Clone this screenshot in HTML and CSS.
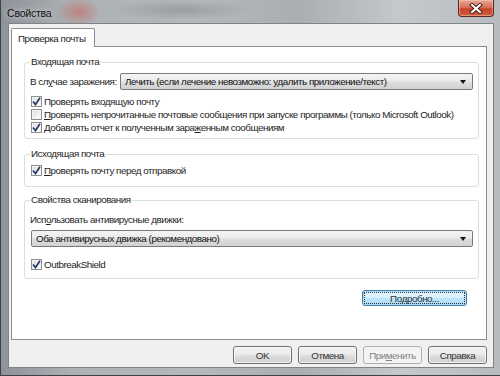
FILE: index.html
```html
<!DOCTYPE html>
<html>
    <head>
        <title>Свойства</title>
        <link rel="stylesheet" href="styles.css">
    </head>
    <body>
        <div class="window">
            <div class="titlebar">
                <span class="title">Свойства</span>
                <div class="close-btn">
                    <svg width="14" height="11" viewBox="0 0 14 11">
                        <path d="M3 2 L11 9 M11 2 L3 9" stroke="#4a1e16" stroke-width="4" stroke-linecap="square"/>
                        <path d="M3 2 L11 9 M11 2 L3 9" stroke="#fff" stroke-width="2" stroke-linecap="square"/>
                    </svg>
                </div>
            </div>

            <div class="client">
                <div class="tabs">
                    <div class="tab">Проверка почты</div>
                </div>

                <div class="tab-panel">
                    <fieldset class="group group-incoming">
                        <legend>Входящая почта</legend>
                        <div class="field-row">
                            <label class="field-label">В сл<u>у</u>чае заражения:</label>
                            <div class="combo">
                                <span>Лечить (если лечение невозможно: удалить приложение/текст)</span>
                                <span class="combo-arrow"></span>
                            </div>
                        </div>
                        <div class="check-row first">
                            <span class="checkbox checked"><svg width="9" height="9" viewBox="0 0 9 9"><path d="M1 4.5 L3.5 7.5 L8 0.8" fill="none" stroke="#263a6b" stroke-width="1.7"/></svg></span>
                            <span>Проверять входящую почту</span>
                        </div>
                        <div class="check-row">
                            <span class="checkbox"></span>
                            <span><u>П</u>роверять непрочитанные почтовые сообщения при запуске программы (только Microsoft Outlook)</span>
                        </div>
                        <div class="check-row">
                            <span class="checkbox checked"><svg width="9" height="9" viewBox="0 0 9 9"><path d="M1 4.5 L3.5 7.5 L8 0.8" fill="none" stroke="#263a6b" stroke-width="1.7"/></svg></span>
                            <span>Добавлять отчет к полученным зара<u>ж</u>енным сообщениям</span>
                        </div>
                    </fieldset>

                    <fieldset class="group group-outgoing">
                        <legend>Исходящая почта</legend>
                        <div class="check-row">
                            <span class="checkbox checked"><svg width="9" height="9" viewBox="0 0 9 9"><path d="M1 4.5 L3.5 7.5 L8 0.8" fill="none" stroke="#263a6b" stroke-width="1.7"/></svg></span>
                            <span><u>П</u>роверять почту перед отправкой</span>
                        </div>
                    </fieldset>

                    <fieldset class="group group-scan">
                        <legend>Свойства сканирования</legend>
                        <div class="plain-label">Исп<u>о</u>льзовать антивирусные движки:</div>
                        <div class="combo combo-wide">
                            <span>Оба антивирусных движка (рекомендовано)</span>
                            <span class="combo-arrow"></span>
                        </div>
                        <div class="check-row">
                            <span class="checkbox checked"><svg width="9" height="9" viewBox="0 0 9 9"><path d="M1 4.5 L3.5 7.5 L8 0.8" fill="none" stroke="#263a6b" stroke-width="1.7"/></svg></span>
                            <span>OutbreakShield</span>
                        </div>
                    </fieldset>

                    <div class="details-row">
                        <div class="button button-focused">По<u>д</u>робно...</div>
                    </div>
                </div>

                <div class="button-bar">
                    <div class="button">OK</div>
                    <div class="button">Отмена</div>
                    <div class="button button-disabled">При<u>м</u>енить</div>
                    <div class="button">Справка</div>
                </div>
            </div>
        </div>
    </body>
</html>
```

FILE: styles.css
```css
body {
    margin: 0;
    width: 500px;
    height: 376px;
    overflow: hidden;
    font-family: "Liberation Sans", Arial, sans-serif;
    font-size: 9.8px;
    letter-spacing: -0.45px;
    white-space: nowrap;
    color: #1e1e1e;
}

/* Aero glass frame */
.window {
    box-sizing: border-box;
    height: 376px;
    display: flex;
    flex-direction: column;
    border-left: 1px solid #3c4247;
    border-bottom: 1px solid #3c4247;
    background:
        radial-gradient(ellipse 22px 14px at 78px 12px, rgba(205, 70, 60, 0.45), rgba(205, 70, 60, 0)),
        radial-gradient(ellipse 70px 10px at 180px 10px, rgba(80, 80, 80, 0.25), rgba(80, 80, 80, 0)),
        linear-gradient(to right, #8d9399 0%, #aeb2b6 15%, #b4b8bc 40%, #a9aeb2 60%, #c6c9cc 80%, #b7bbbf 100%);
}

.titlebar {
    height: 23px;
    display: flex;
    align-items: center;
    justify-content: space-between;
}

.title {
    margin-left: 6px;
    margin-top: 2px;
    font-size: 10.5px;
    letter-spacing: -0.2px;
    color: #111;
    text-shadow: 0 0 6px rgba(255, 255, 255, 0.8);
}

.close-btn {
    align-self: flex-start;
    box-sizing: border-box;
    width: 36px;
    height: 17px;
    margin-right: 6px;
    display: flex;
    align-items: center;
    justify-content: center;
    border: 1px solid #5a2a22;
    border-top: none;
    border-radius: 0 0 4px 4px;
    background: linear-gradient(to bottom, #e9a797 0%, #d9735d 45%, #c7432b 55%, #d25a3f 100%);
    box-shadow: inset 0 0 0 1px rgba(255, 210, 200, 0.45);
}

.client {
    flex: 1;
    display: flex;
    flex-direction: column;
    margin: 0 6px 7px 7px;
    padding: 4px 6px 0 2px;
    background-color: #f0f0f0;
    border: 1px solid #7c8389;
}

/* Tabs */
.tabs {
    display: flex;
}

.tab {
    position: relative;
    z-index: 1;
    box-sizing: border-box;
    height: 19px;
    margin-bottom: -1px;
    padding: 3px 9px 0 6px;
    background-color: #fff;
    border: 1px solid #898c95;
    border-bottom: none;
    border-radius: 2px 2px 0 0;
    line-height: 13px;
}

.tab-panel {
    flex: 1;
    padding: 9px 7px 0 12px;
    background-color: #fff;
    border: 1px solid #898c95;
}

/* Group boxes */
.group {
    margin: 0;
    padding: 0 5px;
    border: 1px solid #d8dfe3;
    border-radius: 3px;
    min-width: 0;
}

.group legend {
    padding: 0 1px;
    line-height: 12px;
}

.group-incoming {
    padding-top: 5px;
    padding-bottom: 4px;
}

.group-outgoing {
    margin-top: 9px;
    padding-top: 4px;
    padding-bottom: 9px;
}

.group-scan {
    margin-top: 7px;
    padding-top: 8px;
    padding-bottom: 7px;
}

.field-row {
    display: flex;
    align-items: center;
}

.field-label {
    width: 90px;
    flex: none;
}

.plain-label {
    line-height: 12px;
}

.combo {
    flex: 1;
    box-sizing: border-box;
    height: 17px;
    display: flex;
    align-items: center;
    justify-content: space-between;
    padding: 0 6px 0 4px;
    border: 1px solid #7a7a7a;
    border-radius: 2px;
    background: linear-gradient(to bottom, #f4f4f4 0%, #ebebeb 45%, #dddddd 55%, #d2d2d2 100%);
    color: #111;
}

.combo-wide {
    margin: 4px 0 0 1px;
}

.combo-arrow {
    width: 0;
    height: 0;
    border-left: 3.5px solid transparent;
    border-right: 3.5px solid transparent;
    border-top: 4px solid #111;
}

/* Checkboxes */
.check-row {
    display: flex;
    align-items: center;
    height: 13px;
}

.check-row.first {
    margin-top: 5px;
}

.group-scan .check-row {
    margin-top: 11px;
}

.checkbox {
    box-sizing: border-box;
    flex: none;
    width: 11px;
    height: 11px;
    margin: 0 2px 0 1px;
    display: flex;
    align-items: center;
    justify-content: center;
    border: 1px solid #8e8f8f;
    background: linear-gradient(135deg, #d9dadb 0%, #f6f6f6 70%, #ffffff 100%);
    box-shadow: inset 0 0 0 1px #f4f4f4;
}

/* Buttons */
.details-row {
    display: flex;
    justify-content: flex-end;
    margin-top: 11px;
    padding-right: 12px;
}

.button {
    box-sizing: border-box;
    width: 59px;
    height: 18px;
    display: flex;
    align-items: center;
    justify-content: center;
    border: 1px solid #707070;
    border-radius: 3px;
    background: linear-gradient(to bottom, #f2f2f2 0%, #ebebeb 45%, #dddddd 55%, #cfcfcf 100%);
    box-shadow: inset 0 0 0 1px rgba(255, 255, 255, 0.7);
    color: #333;
    font-weight: normal;
}

.button-focused {
    width: 105px;
    height: 16px;
    border-color: #3c7fb1;
    background: linear-gradient(to bottom, #eaf6fd 0%, #d9f0fc 45%, #bee6fd 55%, #a7d9f5 100%);
    box-shadow: inset 0 0 0 1px #b4dcf3;
    outline: 1px dotted #333;
    outline-offset: -3px;
}

.button-disabled {
    border-color: #adb2b5;
    background: #f4f4f4;
    box-shadow: none;
    color: #838383;
}

.button-bar {
    display: flex;
    justify-content: flex-end;
    gap: 6px;
    padding: 6px 0 3px;
}
```
